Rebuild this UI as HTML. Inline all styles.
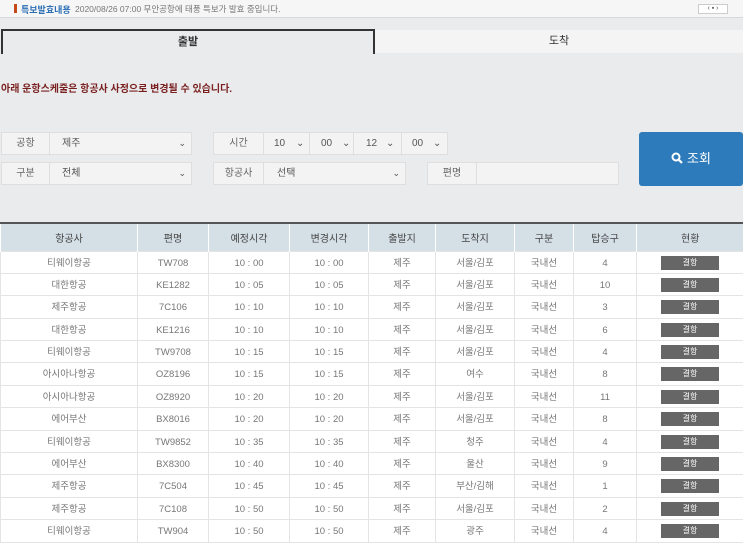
<!DOCTYPE html>
<html><head><meta charset="utf-8"><style>
*{box-sizing:border-box;margin:0;padding:0}
body{width:743px;height:540px;overflow:hidden;background:#e9ebec;font-family:"Liberation Sans","Noto Sans CJK KR",sans-serif;font-size:10px;color:#555;position:relative}
.abs{position:absolute}
.notice{left:0;top:0;width:743px;height:18px;background:#f6f6f6;border-bottom:1px solid #d8d8d8}
.tabL{left:1px;top:29px;width:374px;height:25px;border:2px solid #333;border-bottom:none;background:#e9ebec;text-align:center;line-height:23px;font-weight:bold;color:#333;font-size:11px}
.tabR{left:375px;top:30px;width:368px;height:23px;background:#f4f4f4;text-align:center;line-height:23px;color:#333;font-size:11px}
.warn{left:1px;top:80px;color:#7a1f1f;font-weight:bold;font-size:10px}
.box{background:#f3f3f3;border:1px solid #dedede;height:23px;line-height:21px}
.lab{color:#666;text-align:center;border-right:1px solid #dedede;display:inline-block;height:21px}
.arr{position:absolute;right:5px;top:0;font-size:9px;color:#555}
.btn{left:639px;top:132px;width:104px;height:54px;background:#2e7bbb;border-radius:3px;color:#fff;font-size:13px;text-align:center;line-height:54px}
table{position:absolute;left:0;top:222px;width:743px;border-collapse:collapse;table-layout:fixed}
th{background:#d4dfe6;height:28px;padding:0;border-top:2px solid #555;font-weight:normal;color:#444;font-size:10px;border-left:1px solid #fff}
td{background:#fff;height:22.4px;padding:2px 0 0 0;text-align:center;vertical-align:top;border:1px solid #e4e4e4;color:#777;font-size:9.5px;line-height:19px;overflow:hidden}
.st{display:block;width:58px;height:14px;margin:2px auto 0;background:#666;color:#fff;font-size:8px;line-height:14px}
</style></head><body>
<div class="abs notice"><span class="abs" style="left:14px;top:4px;width:3px;height:9px;background:#c44a1a"></span><span class="abs" style="left:21px;top:3px;color:#2c6fb5;font-weight:bold;font-size:9px">특보발효내용</span><span class="abs" style="left:75px;top:3px;color:#777;font-size:8.5px">2020/08/26 07:00 무안공항에 태풍 특보가 발효 중입니다.</span><span class="abs" style="left:698px;top:4px;width:30px;height:10px;border:1px solid #ccc;background:#fff;font-size:7px;line-height:8px;text-align:center">‹ ▪ ›</span></div>
<div class="abs tabL">출발</div>
<div class="abs tabR">도착</div>
<div class="abs warn">아래 운항스케줄은 항공사 사정으로 변경될 수 있습니다.</div>

<div class="abs box" style="left:1px;top:132px;width:191px"><span class="lab" style="width:48px">공항</span><span class="abs" style="left:60px">제주</span><span class="arr">⌄</span></div>
<div class="abs box" style="left:1px;top:162px;width:191px"><span class="lab" style="width:48px">구분</span><span class="abs" style="left:60px">전체</span><span class="arr">⌄</span></div>
<div class="abs box" style="left:213px;top:132px;width:235px"><span class="lab" style="width:50px">시간</span><span class="abs" style="left:60px">10</span><span class="abs" style="left:82px">⌄</span><span class="abs" style="left:95px;top:0;width:1px;height:21px;background:#dedede"></span><span class="abs" style="left:107px">00</span><span class="abs" style="left:128px">⌄</span><span class="abs" style="left:139px;top:0;width:1px;height:21px;background:#dedede"></span><span class="abs" style="left:152px">12</span><span class="abs" style="left:172px">⌄</span><span class="abs" style="left:187px;top:0;width:1px;height:21px;background:#dedede"></span><span class="abs" style="left:198px">00</span><span class="abs" style="left:219px">⌄</span></div>
<div class="abs box" style="left:213px;top:162px;width:193px"><span class="lab" style="width:50px">항공사</span><span class="abs" style="left:63px">선택</span><span class="arr">⌄</span></div>
<div class="abs box" style="left:427px;top:162px;width:192px"><span class="lab" style="width:49px">편명</span></div>
<div class="abs btn"><svg width="12" height="12" viewBox="0 0 12 12" style="vertical-align:-1px;margin-right:4px"><circle cx="5" cy="5" r="3.5" fill="none" stroke="#fff" stroke-width="2"/><path d="M7.5 7.5L11 11" stroke="#fff" stroke-width="2.2"/></svg>조회</div>

<table>
<colgroup><col style="width:137px"><col style="width:71px"><col style="width:81px"><col style="width:79px"><col style="width:67px"><col style="width:79px"><col style="width:59px"><col style="width:63px"><col style="width:107px"></colgroup>
<tr><th>항공사</th><th>편명</th><th>예정시각</th><th>변경시각</th><th>출발지</th><th>도착지</th><th>구분</th><th>탑승구</th><th>현황</th></tr>
<tr><td>티웨이항공</td><td>TW708</td><td>10 : 00</td><td>10 : 00</td><td>제주</td><td>서울/김포</td><td>국내선</td><td>4</td><td><span class="st">결항</span></td></tr>
<tr><td>대한항공</td><td>KE1282</td><td>10 : 05</td><td>10 : 05</td><td>제주</td><td>서울/김포</td><td>국내선</td><td>10</td><td><span class="st">결항</span></td></tr>
<tr><td>제주항공</td><td>7C106</td><td>10 : 10</td><td>10 : 10</td><td>제주</td><td>서울/김포</td><td>국내선</td><td>3</td><td><span class="st">결항</span></td></tr>
<tr><td>대한항공</td><td>KE1216</td><td>10 : 10</td><td>10 : 10</td><td>제주</td><td>서울/김포</td><td>국내선</td><td>6</td><td><span class="st">결항</span></td></tr>
<tr><td>티웨이항공</td><td>TW9708</td><td>10 : 15</td><td>10 : 15</td><td>제주</td><td>서울/김포</td><td>국내선</td><td>4</td><td><span class="st">결항</span></td></tr>
<tr><td>아시아나항공</td><td>OZ8196</td><td>10 : 15</td><td>10 : 15</td><td>제주</td><td>여수</td><td>국내선</td><td>8</td><td><span class="st">결항</span></td></tr>
<tr><td>아시아나항공</td><td>OZ8920</td><td>10 : 20</td><td>10 : 20</td><td>제주</td><td>서울/김포</td><td>국내선</td><td>11</td><td><span class="st">결항</span></td></tr>
<tr><td>에어부산</td><td>BX8016</td><td>10 : 20</td><td>10 : 20</td><td>제주</td><td>서울/김포</td><td>국내선</td><td>8</td><td><span class="st">결항</span></td></tr>
<tr><td>티웨이항공</td><td>TW9852</td><td>10 : 35</td><td>10 : 35</td><td>제주</td><td>청주</td><td>국내선</td><td>4</td><td><span class="st">결항</span></td></tr>
<tr><td>에어부산</td><td>BX8300</td><td>10 : 40</td><td>10 : 40</td><td>제주</td><td>울산</td><td>국내선</td><td>9</td><td><span class="st">결항</span></td></tr>
<tr><td>제주항공</td><td>7C504</td><td>10 : 45</td><td>10 : 45</td><td>제주</td><td>부산/김해</td><td>국내선</td><td>1</td><td><span class="st">결항</span></td></tr>
<tr><td>제주항공</td><td>7C108</td><td>10 : 50</td><td>10 : 50</td><td>제주</td><td>서울/김포</td><td>국내선</td><td>2</td><td><span class="st">결항</span></td></tr>
<tr><td>티웨이항공</td><td>TW904</td><td>10 : 50</td><td>10 : 50</td><td>제주</td><td>광주</td><td>국내선</td><td>4</td><td><span class="st">결항</span></td></tr>
</table>
</body></html>
